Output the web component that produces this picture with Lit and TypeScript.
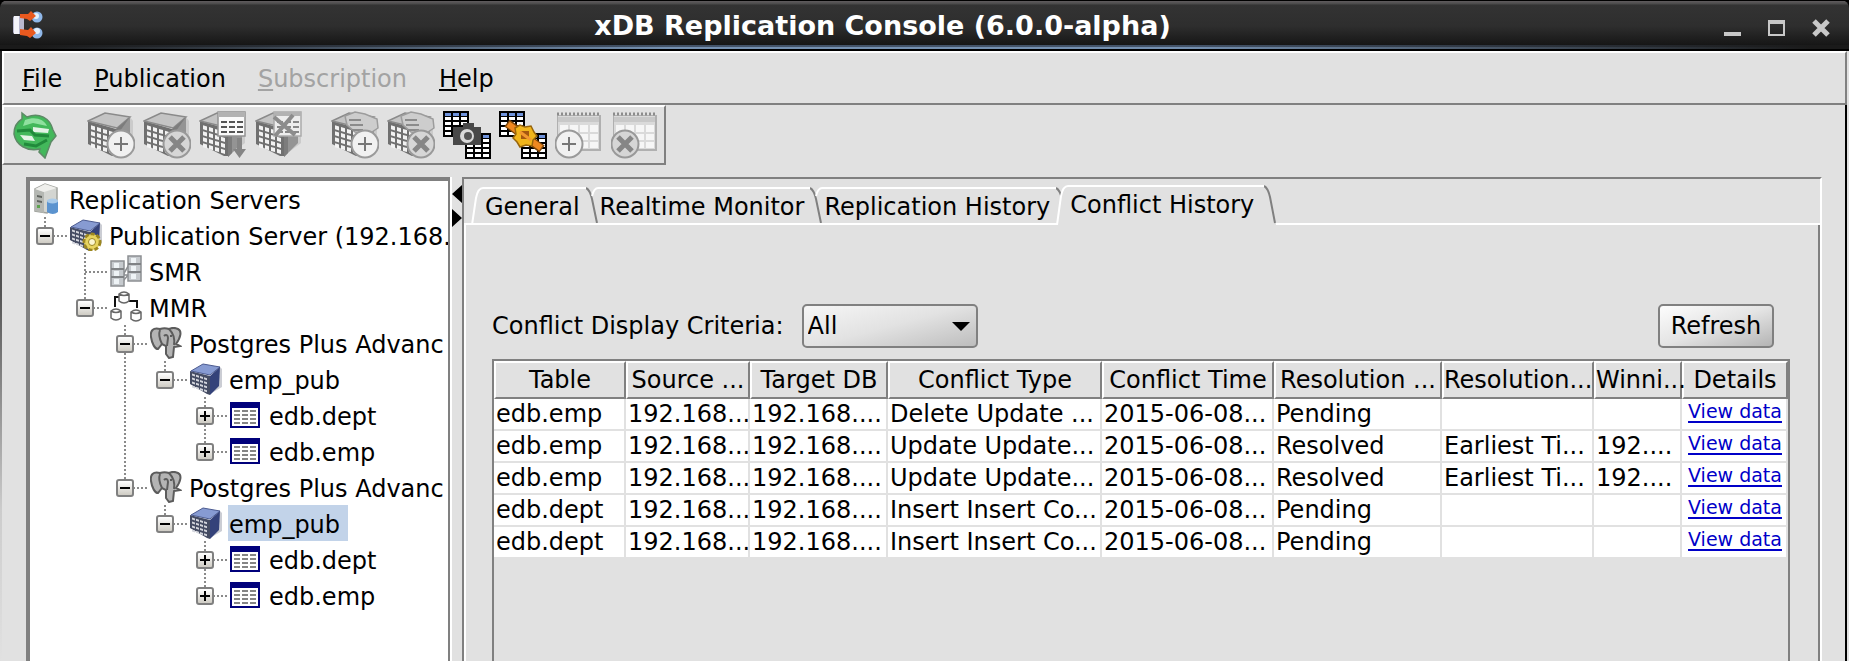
import { LitElement, html, svg, css, nothing } from "lit";
import { customElement, state } from "lit/decorators.js";

const px = (fill: string, d: string) => svg`<path fill=${fill} d=${d}></path>`;

/* window panes on the slanted front face of a cube */
const panes = (x: number, y: number, w: number, h: number, dx: number, dy: number, cols: number, rows: number, fill: string) => svg`
  <g transform="skewY(17)">${Array.from({ length: cols * rows }, (_, i) => svg`
    <rect x=${x + (i % cols) * dx} y=${y + Math.floor(i / cols) * dy} width=${w} height=${h} fill=${fill}></rect>`)}</g>`;

/* ---------- toolbar artwork, 48 x 48 ---------- */
const greyCube = svg`
  <path fill="#a9a9a9" d="M30 44 46 32V10L43 6z" opacity=".4"></path>
  <path fill="#707070" d="M1 10 29 18V45L25 45 1 33z"></path>
  <path fill="#c4c4c4" stroke="#8a8a8a" stroke-width="1.5" d="M1 10 18 2 43 6 30 17z"></path>
  <path fill="#949494" d="M43 6 29 18V46L43 32z"></path>
  <path fill="#7c7c7c" d="M43 6 29 18V46L33 42V20z"></path>
  ${panes(4, 13, 4, 4, 6, 6, 4, 4, "#f2f2f2")}`;
const plusBadge = (cx: number) => svg`
  <circle cx=${cx} cy="33" r="13.5" fill="#f1f1f1" stroke="#9a9a9a" stroke-width="2"></circle>
  <path stroke="#777" stroke-width="2" d=${`M${cx - 7} 33h14M${cx} 26v14`}></path>`;
const crossBadge = (cx: number) => svg`
  <circle cx=${cx} cy="33" r="13.5" fill="#d6d6d6" stroke="#999" stroke-width="2"></circle>
  <path stroke="#868686" stroke-width="5" d=${`M${cx - 7} 26l14 14M${cx + 7} 26l-14 14`}></path>`;
const greyHand = svg`
  <path fill="#cdcdcd" stroke="#9c9c9c" stroke-width="1.5" d="M14 5 24 1 34 3 46 8 47 17 38 23 24 21 16 14z"></path>
  <path stroke="#8b8b8b" stroke-width="2" fill="none" d="M18 9h12M19 14h13M21 19h11"></path>`;
const miniGrid = (x: number, y: number) => svg`
  <rect x=${x} y=${y} width="26" height="26" fill="#000"></rect>
  ${[0, 1, 2].map((c) => svg`
    <rect x=${x + 2 + c * 8} y=${y + 2} width="6" height="3" fill="#6f93dc"></rect>
    ${[0, 1, 2, 3].map((r) => svg`<rect x=${x + 2 + c * 8} y=${y + 6 + r * 5} width="6" height="3" fill="#fff"></rect>`)}`)}`;
const greySheet = svg`
  <rect x="2" y="4" width="44" height="36" fill="#b0b0b0"></rect>
  <rect x="3" y="5" width="41" height="33" fill="#dadada"></rect>
  <path stroke="#8c8c8c" stroke-width="3" stroke-dasharray="2 2" d="M2 3h44"></path>
  <path fill="#f6f6f6" d="M5 14h8v7H5zM15 14h8v7h-8zM25 14h8v7h-8zM35 14h8v7h-8zM5 23h8v6H5zM15 23h8v6h-8zM25 23h8v6h-8zM35 23h8v6h-8zM25 31h8v6h-8zM35 31h8v6h-8z"></path>
  <path fill="#c8c8c8" d="M3 6h41v5H3z"></path>`;

const toolArt: Record<string, unknown> = {
  refresh: svg`
    <path fill="#43b85b" stroke="#5d8a66" stroke-width="1.5"
      d="M11 2 16 6C28 1 39 7 42 19L45 25 40 31 34 47 28 41 29 38C16 41 5 34 3 23 3 15 6 11 11 8z"></path>
    <path fill="#8fe09f" d="M14 9C24 5 33 8 36 15L22 12 12 15z"></path>
    <path fill="#e4f3e6" d="M22 16 38 18 37 22 22 21zM9 24 21 25 24 30 13 29z"></path>
    <path stroke="#218a3b" stroke-width="3" fill="none" d="M6 20 19 19 24 24 38 25M13 33 25 35 36 29"></path>`,
  addPub: svg`${greyCube}${plusBadge(34)}`,
  delPub: svg`${greyCube}${crossBadge(34)}`,
  addTable: svg`${greyCube}
    <rect x="19" y="1" width="27" height="24" fill="#fafafa" stroke="#939393" stroke-width="1.5"></rect>
    <path fill="#b2b2b2" d="M19 1h27v5H19z"></path>
    <path stroke="#555" stroke-width="2" stroke-dasharray="6 2" d="M22 11h22M22 16h22M22 21h22"></path>
    <path fill="#858585" d="M38 27h5v11h4l-6.500 9-6.500-9h4z"></path>`,
  delTable: svg`${greyCube}
    <rect x="19" y="1" width="27" height="24" fill="#ededed" stroke="#aaa" stroke-width="1.5"></rect>
    <path fill="#b2b2b2" d="M19 1h27v4H19z"></path>
    <path stroke="#888" stroke-width="2" stroke-dasharray="6 2" d="M22 11h22M22 16h22M22 21h22"></path>
    <path stroke="#8c8c8c" stroke-width="4" d="M19 6 40 24M38 4 20 25"></path>`,
  addSub: svg`${greyCube}${greyHand}${plusBadge(34)}`,
  delSub: svg`${greyCube}${greyHand}${crossBadge(34)}`,
  snapshot: svg`${miniGrid(0, 0)}${miniGrid(22, 22)}
    <path fill="#484848" d="M10 16h10v-4h11v4h7v18H10z"></path>
    <circle cx="24" cy="25" r="7" fill="#d9d9d9"></circle><circle cx="25" cy="25" r="4" fill="#555"></circle>`,
  sync: svg`${miniGrid(0, 0)}${miniGrid(22, 22)}
    <path stroke="#7c4508" stroke-width="9" d="M8 12 43 38"></path>
    <path stroke="#ef8820" stroke-width="6" d="M9 13 42 37"></path>
    <path fill="#f0b51b" stroke="#98650c" stroke-width="1.500" d="M16 17l5-3 5 2 6-1 3 6 3 4-4 4-1 6-6-1-6 2-3-5-4-4 3-4z"></path>
    <path fill="#a45710" d="M22 20h8v8h-8z"></path><path stroke="#f29830" stroke-width="3" d="M21 21l11 8"></path>`,
  sheetAdd: svg`${greySheet}${plusBadge(14)}`,
  sheetDel: svg`${greySheet}${crossBadge(14)}`,
};

/* ---------- tree artwork, 32 x 32 ---------- */
const blueCube = svg`
  <path fill="#a9acb8" opacity=".6" d="M20 31 32 24V6L30 4z"></path>
  <path fill="#454c63" d="M0 8 20 13V32L17 31 0 21z"></path>
  <path fill="#879bd2" stroke="#4c5b90" d="M1 8 13 1 30 4 20 12z"></path>
  <path fill="#34427a" d="M30 4 20 13V32L29 23z"></path>
  ${panes(2, 10, 3, 2, 4, 4, 4, 4, "#d3d5dc")}`;
const cylinder = (x: number, y: number) => svg`
  <path fill="#fdfdfd" stroke="#666" stroke-width="1.500" d=${`M${x} ${y + 2}q5-4 10 0v7q-5 4-10 0zM${x} ${y + 2}q5 3 10 0`}></path>`;
const rack = (x: number, y: number) => svg`
  <rect x=${x} y=${y} width="13" height="25" fill="#c6cace" stroke="#8c8f92" stroke-width="1.5"></rect>
  <path stroke="#7f8285" stroke-width="2" d=${`M${x} ${y + 8}h13M${x} ${y + 16}h13`}></path>
  <path fill="#eef3f6" d=${`M${x + 3} ${y + 2}h5v5h-5zM${x + 3} ${y + 10}h5v5h-5zM${x + 3} ${y + 18}h5v5h-5z`}></path>`;

const treeArt: Record<string, unknown> = {
  servers: svg`
    <path fill="#d3d5d1" stroke="#a0a29d" stroke-width="1.500" d="M5 6 15 1 27 5V24L17 30 5 28z"></path>
    <path fill="#b4b7b2" d="M5 6 14 9V30L5 28z"></path><path fill="#efefec" d="M5 6 15 1 27 5 14 9z"></path>
    <path fill="#60645f" d="M7 12l5 1v2l-5-1zM7 17l5 1v2l-5-1z"></path><path fill="#5ea34f" d="M7 22h3v3H7z"></path>
    <path fill="#5b93cf" d="M17 18q5-3 11 0v11q-5 4-11 0z"></path><ellipse cx="22.500" cy="18" rx="5.500" ry="2.500" fill="#a9cbea"></ellipse>`,
  pubServer: svg`${blueCube}
    <circle cx="22" cy="23" r="8" fill="#e3cf5a" stroke="#9c8720" stroke-width="3" stroke-dasharray="4 2"></circle>
    <circle cx="22" cy="23" r="6.500" fill="#e8d560"></circle><circle cx="22" cy="23" r="3.500" fill="#fbf6cf" stroke="#9c8720"></circle>`,
  smr: svg`<path stroke="#8c8f92" stroke-width="1.500" d="M13 20 20 8M13 20h7M13 26 20 18"></path>${rack(1, 6)}${rack(18, 1)}`,
  mmr: svg`<path fill="none" stroke="#111" stroke-width="2" d="M10 6H5v10M19 10h8v7"></path>${cylinder(9, 1)}${cylinder(1, 18)}${cylinder(21, 19)}`,
  postgres: svg`
    <path fill="#b4b4b4" stroke="#5c5c5c" stroke-width="2" d="M10 2C3 0 0 4 1 10 2 17 5 22 8 22L12 17 16 19 16 27 19 31 23 30 24 20 30 19 26 17C31 10 32 4 28 2 24 0 21 1 19 2 16 1 13 1 10 2z"></path>
    <path fill="none" stroke="#5c5c5c" stroke-width="2" d="M10 3C8 8 10 13 12 17M19 2C23 6 25 12 24 18M14 9C16 7 18 8 18 11L17 19M20 9h2"></path>`,
  cube: blueCube,
  table: svg`
    <rect x="0" y="3" width="30" height="26" fill="#00007b"></rect><rect x="2" y="9" width="26" height="18" fill="#fff"></rect>
    <path stroke="#858585" stroke-width="2" stroke-dasharray="6 2" d="M4 12h22M4 16h22M4 20h22M4 24h22"></path>`,
};

/* guide codes per column: " " blank, "|" through line, "L" last child, "T" middle child */
interface Node { g: string; icon: string; label: string; exp?: "-" | "+"; selected?: boolean; }
const nodes: Node[] = [
  { g: "", icon: "servers", label: "Replication Servers" },
  { g: "L", icon: "pubServer", label: "Publication Server (192.168.", exp: "-" },
  { g: " T", icon: "smr", label: "SMR" },
  { g: " L", icon: "mmr", label: "MMR", exp: "-" },
  { g: "  T", icon: "postgres", label: "Postgres Plus Advanc", exp: "-" },
  { g: "  |L", icon: "cube", label: "emp_pub", exp: "-" },
  { g: "  | T", icon: "table", label: "edb.dept", exp: "+" },
  { g: "  | L", icon: "table", label: "edb.emp", exp: "+" },
  { g: "  L", icon: "postgres", label: "Postgres Plus Advanc", exp: "-" },
  { g: "   L", icon: "cube", label: "emp_pub", exp: "-", selected: true },
  { g: "    T", icon: "table", label: "edb.dept", exp: "+" },
  { g: "    L", icon: "table", label: "edb.emp", exp: "+" },
];

@customElement("server-tree")
class ServerTree extends LitElement {
  static styles = css`
    :host { display: block; overflow: hidden; background: #fff; border: 4px solid #808080; border-width: 4px 2px 0 4px; box-shadow: 2px 0 #fff; }
    .row { display: flex; height: 36px; }
    .guide { flex: none; width: 40px; height: 36px; display: grid; }
    .guide > * { grid-area: 1 / 1; }
    .toggle { width: 18px; height: 18px; margin: 10px 0 0 6px; padding: 0; border: 2px solid #808080; border-radius: 3px;
      background: linear-gradient(#fff, #cfccc4); display: block; }
    .toggle svg { display: block; }
    .icon { flex: none; width: 32px; height: 32px; margin: 2px 6px 0 0; }
    .label { flex: none; height: 36px; line-height: 40px; padding: 0 8px 0 1px; white-space: pre; }
    .selected { background: #c2d3e9; }
  `;
  private guide(c: string, last: boolean, exp?: string) {
    const d = (c === "L" ? "M15 0V18" : c === " " ? "" : "M15 0V36") + (last ? "M15 19H38" : "");
    return html`<span class="guide">
      <svg width="40" height="36"><path d=${d} fill="none" stroke="#8a8a8a" stroke-width="2" stroke-dasharray="2 2"></path></svg>
      ${last && exp ? html`<button class="toggle" aria-label=${exp === "-" ? "Collapse" : "Expand"}>
        <svg width="14" height="14"><path fill="#000" d=${exp === "-" ? "M2 6h10v2H2z" : "M2 6h10v2H2zM6 2h2v10H6z"}></path></svg></button>` : nothing}
    </span>`;
  }
  render() {
    return html`<div role="tree" aria-label="Replication servers">${nodes.map((n) => html`
      <div class="row" role="treeitem" aria-level=${n.g.length + 1} aria-selected=${n.selected ? "true" : "false"}>
        ${[...n.g].map((c, i) => this.guide(c, i === n.g.length - 1, n.exp))}
        <svg class="icon" viewBox="0 0 32 32" aria-hidden="true">${treeArt[n.icon]}</svg>
        <span class="label ${n.selected ? "selected" : ""}">${n.label}</span>
      </div>`)}</div>`;
  }
}

const columns: [string, number][] = [
  ["Table", 132], ["Source ...", 124], ["Target DB", 138], ["Conflict Type", 214], ["Conflict Time", 172],
  ["Resolution ...", 168], ["Resolution...", 152], ["Winni...", 88], ["Details", 106],
];
const record = (table: string, type: string, status: string, how = "", winner = "") =>
  [table, "192.168...", "192.168....", type, "2015-06-08...", status, how, winner];
const records = [
  record("edb.emp", "Delete Update ...", "Pending"),
  record("edb.emp", "Update Update...", "Resolved", "Earliest Ti...", "192...."),
  record("edb.emp", "Update Update...", "Resolved", "Earliest Ti...", "192...."),
  record("edb.dept", "Insert Insert Co...", "Pending"),
  record("edb.dept", "Insert Insert Co...", "Pending"),
];

@customElement("conflict-table")
class ConflictTable extends LitElement {
  static styles = css`
    :host { display: block; border: 2px solid #808080; border-bottom: 0; }
    table { width: 100%; table-layout: fixed; border-collapse: separate; border-spacing: 0; }
    th { box-sizing: border-box; height: 38px; padding: 0; font-weight: normal; line-height: 34px; white-space: nowrap;
      border: 2px solid; border-color: #fff #808080 #808080 #fff; text-align: center; }
    td { box-sizing: border-box; height: 32px; padding: 0 0 0 2px; line-height: 30px; white-space: nowrap; overflow: hidden;
      background: #fff; border: 2px solid #e1e1e1; border-width: 0 2px 2px 0; }
    .details { text-align: center; vertical-align: top; line-height: 22px; }
    a { font-size: 19px; color: #0000c8; text-decoration: underline; text-decoration-thickness: 2px; text-underline-offset: 3px; }
  `;
  render() {
    return html`<table>
      <colgroup>${columns.map(([, w]) => html`<col style="width:${w}px">`)}</colgroup>
      <thead><tr>${columns.map(([name]) => html`<th scope="col">${name}</th>`)}</tr></thead>
      <tbody>${records.map((r) => html`<tr>${r.map((v) => html`<td>${v}</td>`)}<td class="details"><a href="#">View data</a></td></tr>`)}</tbody>
    </table>`;
  }
}

const tabs = ["General", "Realtime Monitor", "Replication History", "Conflict History"];
const menus: [string, boolean][] = [["File", true], ["Publication", true], ["Subscription", false], ["Help", true]];
const toolGroups: [string, string, boolean][][] = [
  [["refresh", "Refresh", true]],
  [["addPub", "Create publication", false], ["delPub", "Remove publication", false], ["addTable", "Add tables", false], ["delTable", "Remove tables", false]],
  [["addSub", "Create subscription", false], ["delSub", "Remove subscription", false], ["snapshot", "Snapshot", true],
   ["sync", "Synchronize", true], ["sheetAdd", "Create schedule", false], ["sheetDel", "Remove schedule", false]],
];

@customElement("app-root")
class AppRoot extends LitElement {
  @state() private active = 3;
  static styles = css`
    :host { display: flex; flex-direction: column; box-sizing: border-box; min-height: 100vh; background: #e1e1e1; color: #000;
      font: 24px "DejaVu Sans", sans-serif; }
    button, select { font: inherit; color: inherit; }
    .titlebar { display: flex; align-items: center; height: 51px; box-sizing: border-box; padding: 3px 16px 0 12px; color: #fff;
      border-radius: 8px 8px 0 0;
      background:
        linear-gradient(#000, #000) 0 100% / 100% 2px no-repeat,
        linear-gradient(90deg, #1a1a1a 2%, #7590b0 36%, #7590b0 64%, #1a1a1a 98%) 0 47px / 100% 2px no-repeat,
        linear-gradient(90deg, #1a1a1a 2%, #435369 36%, #435369 64%, #1a1a1a 98%) 0 45px / 100% 2px no-repeat,
        linear-gradient(#000 1px, #605c5e 1px, #4a4a4a 4px, #333 5px, #2e2e2e 26px, #161616 45px); }
    .frame { background: #000; }
    .logo { width: 32px; height: 32px; }
    .title { flex: 1; margin: 0; font-size: 27px; line-height: 32px; text-align: center; padding-bottom: 2px; }
    .wins { display: flex; gap: 20px; }
    .win { width: 24px; height: 24px; padding: 0; border: 0; background: none; }
    .win svg { display: block; }
    .body { flex: 1; display: flex; flex-direction: column; border-right: 2px solid #000; border-left: 2px solid;
      border-image: linear-gradient(#222, #555 40%, #ccc 75%, #e1e1e1) 1; border-image-width: 0 0 0 2px; box-shadow: inset -2px 0 #000; }
    .menus { display: flex; height: 54px; box-sizing: border-box; padding: 0 18px; gap: 32px; border: 2px solid; border-color: #fff #808080 #808080 #fff; }
    .menu { padding: 0; border: 0; background: none; line-height: 52px; height: 50px; }
    .menu::first-letter { text-decoration: underline; text-decoration-thickness: 2px; text-underline-offset: 2px; }
    .menu:disabled { color: #a3a3a3; }
    .tools { display: flex; align-self: flex-start; gap: 28px; height: 60px; box-sizing: border-box; padding: 4px 5px 4px 7px;
      border: 2px solid; border-color: #fff #808080 #808080 #fff; }
    .group { display: flex; gap: 8px; }
    .tool { width: 48px; height: 48px; padding: 0; border: 0; background: none; }
    .tool svg { display: block; }
    .main { flex: 1; display: flex; padding: 12px 25px 0 24px; }
    server-tree { flex: 0 0 418px; min-width: 0; }
    .split { flex: none; width: 12px; padding-top: 8px; box-sizing: border-box; }
    .split svg { display: block; margin-left: 2px; }
    .panel { flex: 1; min-width: 0; display: flex; flex-direction: column; border: 2px solid; border-color: #808080 #fff #fff #808080; border-bottom: 0; }
    .tabs { display: flex; height: 46px; box-sizing: border-box; padding: 6px 0 0 7px; align-items: flex-end; background: linear-gradient(#fff, #fff) 0 100% / 8px 2px no-repeat; }
    .tab { display: flex; height: 38px; padding: 0; border: 0; background: none; margin-right: -12px; }
    .on { height: 40px; z-index: 1; margin-right: 0; }
    .tab svg { flex: none; display: block; height: 100%; width: 12px; }
    .tabtext { height: 100%; box-sizing: border-box; border-top: 2px solid #fff; border-bottom: 2px solid #fff; line-height: 36px; padding: 0 6px 0 2px; }
    .on .tabtext { border-bottom-color: #e1e1e1; padding-right: 10px; background: #e1e1e1; }
    .rest { flex: 1; height: 2px; background: #fff; }
    .content { flex: 1; display: flex; flex-direction: column; padding: 79px 28px 0 26px; border-left: 2px solid #fff; border-right: 2px solid #808080; }
    .bar { display: flex; align-items: center; margin-bottom: 11px; padding-right: 16px; line-height: 36px; }
    .combo { appearance: none; width: 176px; height: 44px; margin-left: 18px; padding: 0 4px; border: 2px solid #808080; border-radius: 5px; line-height: 36px;
      background: url('data:image/svg+xml,<svg xmlns="http://www.w3.org/2000/svg" width="18" height="9"><path d="M0 0h18l-9 9z"/></svg>') right 6px center no-repeat,
        linear-gradient(165deg, #f6f6f6, #e2e2e2 50%, #bdbdbd); }
    .refresh { margin-left: auto; width: 116px; height: 44px; padding: 0; border: 2px solid #808080; border-radius: 5px;
      background: linear-gradient(160deg, #fdfdfd, #e4e4e4 50%, #b4b4b4); }
    conflict-table { flex: 1; }
  `;
  private leftEdge(i: number, on: boolean) {
    if (on) return svg`<path fill="#e1e1e1" d="M12 1Q7 1 5 11L1 40H12z"></path><path fill="none" stroke="#fff" stroke-width="2" d="M12 1Q7 1 5 11L1 40"></path>`;
    const d = i === 0 || i > this.active ? "M12 1Q7 1 5 11L1 38" : "M12 1Q8 1 6 9";
    return svg`<path fill="none" stroke="#fff" stroke-width="2" d=${d}></path>${px("#fff", "M0 36h12v2H0z")}`;
  }
  render() {
    return html`
      <div class="frame"><header class="titlebar">
        <svg class="logo" viewBox="0 0 32 32" aria-hidden="true">
          <rect x="1" y="5" width="11" height="18" rx="2" fill="#b9b9d0"></rect><rect x="2" y="5" width="5" height="18" fill="#f4f4fa"></rect>
          <circle cx="25" cy="6" r="5.500" fill="#8fb7e8"></circle><circle cx="24" cy="5" r="3" fill="#e5f0fb"></circle>
          <circle cx="25" cy="22" r="5.500" fill="#8fb7e8"></circle><circle cx="25" cy="20" r="3" fill="#e5f0fb"></circle>
          <path fill="#e9591f" d="M8 3H16L19 0 24 5 18 10 15 8 8 7zM8 18 16 19 19 16 24 22 18 27 15 25 8 24z"></path>
        </svg>
        <h1 class="title">xDB Replication Console (6.0.0-alpha)</h1>
        <div class="wins">
          <button class="win" aria-label="Minimize"><svg width="24" height="24"><path fill="#c8c8c8" d="M3 17h17v4H3z"></path></svg></button>
          <button class="win" aria-label="Maximize"><svg width="24" height="24"><path fill="#c8c8c8" fill-rule="evenodd" d="M3 5h17v16H3zM5 9v10h13V9z"></path></svg></button>
          <button class="win" aria-label="Close"><svg width="24" height="24"><path stroke="#c8c8c8" stroke-width="5" d="M5 6 19 20M19 6 5 20"></path></svg></button>
        </div>
      </header></div>
      <div class="body">
        <nav class="menus">${menus.map(([m, ok]) => html`<button class="menu" ?disabled=${!ok}>${m}</button>`)}</nav>
        <div class="tools" role="toolbar">${toolGroups.map((g) => html`<div class="group">${g.map(([k, name, ok]) => html`
          <button class="tool" aria-label=${name} ?disabled=${!ok}><svg width="48" height="48" viewBox="0 0 48 48">${toolArt[k]}</svg></button>`)}</div>`)}</div>
        <main class="main">
          <server-tree></server-tree>
          <div class="split"><svg width="10" height="42"><path d="M10 0V18L0 9zM0 24V42L10 33z"></path></svg></div>
          <section class="panel">
            <div class="tabs" role="tablist">
              ${tabs.map((t, i) => {
                const on = i === this.active;
                const h = on ? 40 : 38;
                return html`<button class="tab ${on ? "on" : ""}" role="tab" aria-selected=${on ? "true" : "false"} @click=${() => (this.active = i)}>
                  <svg viewBox="0 0 12 ${h}">${this.leftEdge(i, on)}</svg>
                  <span class="tabtext">${t}</span>
                  <svg viewBox="0 0 12 ${h}">${on ? nothing : px("#fff", "M0 36h12v2H0z")}<path fill="none" stroke="#808080" stroke-width="2" d="M0 1Q4 3 6 12L11 ${h - 2}"></path></svg>
                </button>`;
              })}
              <div class="rest"></div>
            </div>
            <div class="content">
              <div class="bar">
                <label for="criteria">Conflict Display Criteria:</label>
                <select class="combo" id="criteria"><option>All</option></select>
                <button class="refresh">Refresh</button>
              </div>
              <conflict-table></conflict-table>
            </div>
          </section>
        </main>
      </div>`;
  }
}
